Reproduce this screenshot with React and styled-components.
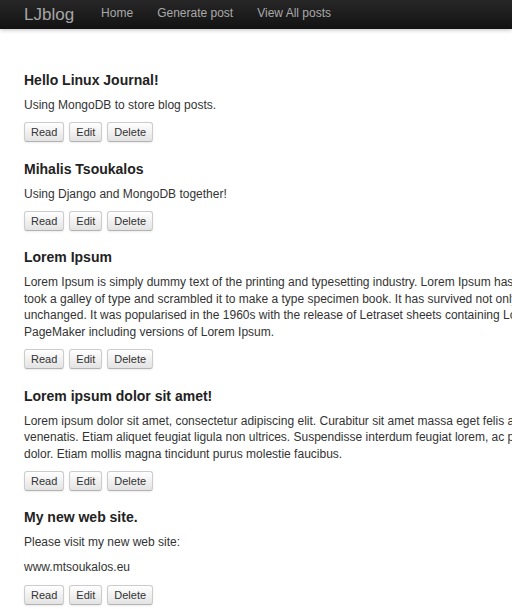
import styled, { createGlobalStyle } from "styled-components";

const GlobalStyle = createGlobalStyle`
  html, body {
    margin: 0;
    padding: 0;
    background: #fff;
    overflow: hidden;
  }
  body {
    font-family: "Liberation Sans", Helvetica, Arial, sans-serif;
    color: #333;
  }
`;

const Navbar = styled.div`
  height: 29px;
  background: linear-gradient(#272727, #121212);
  box-shadow: 0 1px 4px rgba(0, 0, 0, 0.25);
  display: flex;
  align-items: center;
  padding-left: 24px;
`;

const Brand = styled.a`
  font-size: 17px;
  color: #a6a6a6;
  text-decoration: none;
  margin-right: 15px;
  line-height: 29px;
`;

const NavLink = styled.a`
  font-size: 12px;
  color: #a9a9a9;
  text-decoration: none;
  padding: 0 12px;
  line-height: 26px;
  padding-bottom: 3px;
`;

const Container = styled.div`
  padding: 42px 24px 0;
`;

const Post = styled.div`
  margin-bottom: 17.5px;
`;

const PostTitle = styled.h4`
  font-size: 14px;
  font-weight: bold;
  line-height: 18px;
  margin: 0 0 8px;
  color: #222;
`;

const PostText = styled.p`
  font-size: 12px;
  line-height: 16.6px;
  margin: 0 0 8.5px;
  white-space: nowrap;
  color: #333;
`;

const Actions = styled.div`
  display: flex;
  gap: 5px;
`;

const Button = styled.button`
  height: 20px;
  padding: 0 6px;
  font-family: inherit;
  font-size: 11px;
  color: #333;
  background: linear-gradient(#ffffff, #e3e3e3);
  border: 1px solid #cccccc;
  border-bottom-color: #b3b3b3;
  border-radius: 3px;
  box-shadow: inset 0 1px 0 rgba(255, 255, 255, 0.2), 0 1px 2px rgba(0, 0, 0, 0.08);
  cursor: pointer;
`;

const posts = [
  {
    title: "Hello Linux Journal!",
    paragraphs: [["Using MongoDB to store blog posts."]],
  },
  {
    title: "Mihalis Tsoukalos",
    paragraphs: [["Using Django and MongoDB together!"]],
  },
  {
    title: "Lorem Ipsum",
    paragraphs: [
      [
        "Lorem Ipsum is simply dummy text of the printing and typesetting industry. Lorem Ipsum has been the industry's standard dummy text ever since the 1500s, when an unknown printer",
        "took a galley of type and scrambled it to make a type specimen book. It has survived not only five centuries, but also the leap into electronic typesetting, remaining essentially",
        "unchanged. It was popularised in the 1960s with the release of Letraset sheets containing Lorem Ipsum passages, and more recently with desktop publishing software like Aldus",
        "PageMaker including versions of Lorem Ipsum.",
      ],
    ],
  },
  {
    title: "Lorem ipsum dolor sit amet!",
    paragraphs: [
      [
        "Lorem ipsum dolor sit amet, consectetur adipiscing elit. Curabitur sit amet massa eget felis aliquet tincidunt. Nam fermentum, nisl at",
        "venenatis. Etiam aliquet feugiat ligula non ultrices. Suspendisse interdum feugiat lorem, ac pretium nunc tempus ac. Donec ut lorem et",
        "dolor. Etiam mollis magna tincidunt purus molestie faucibus.",
      ],
    ],
  },
  {
    title: "My new web site.",
    paragraphs: [["Please visit my new web site:"], ["www.mtsoukalos.eu"]],
  },
];

export default function App() {
  return (
    <>
      <GlobalStyle />
      <Navbar>
        <Brand href="#">LJblog</Brand>
        <NavLink href="#">Home</NavLink>
        <NavLink href="#">Generate post</NavLink>
        <NavLink href="#">View All posts</NavLink>
      </Navbar>
      <Container>
        {posts.map((post) => (
          <Post key={post.title}>
            <PostTitle>{post.title}</PostTitle>
            {post.paragraphs.map((lines, i) => (
              <PostText key={i}>
                {lines.map((line, j) => (
                  <span key={j}>
                    {j > 0 && <br />}
                    {line}
                  </span>
                ))}
              </PostText>
            ))}
            <Actions>
              <Button>Read</Button>
              <Button>Edit</Button>
              <Button>Delete</Button>
            </Actions>
          </Post>
        ))}
      </Container>
    </>
  );
}
